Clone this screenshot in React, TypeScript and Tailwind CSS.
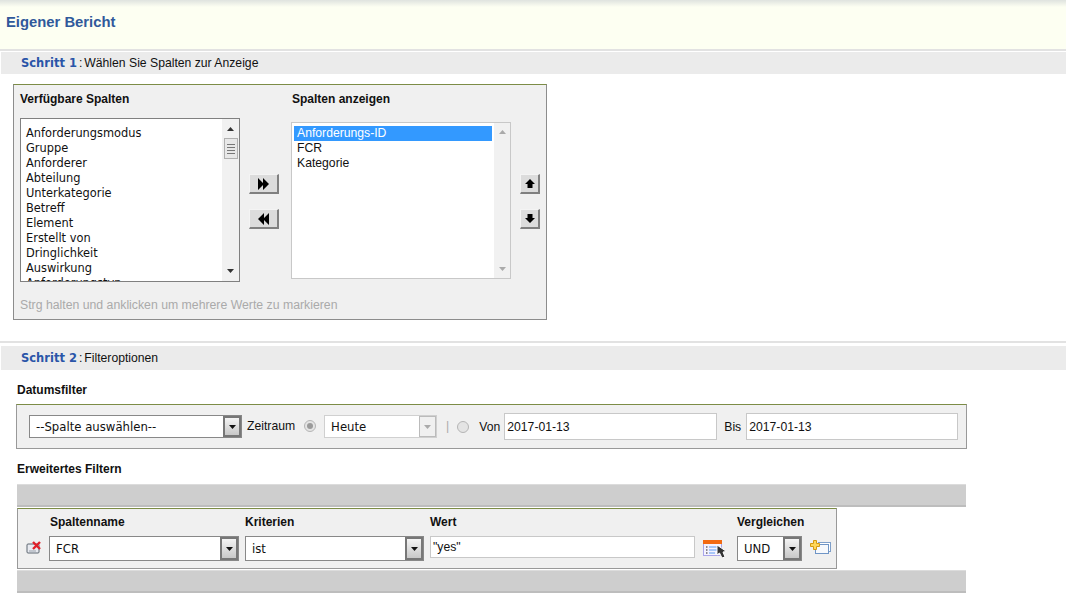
const arial = "font-['Liberation_Sans',Arial,sans-serif]";
const wide = "font-['DejaVu_Sans',Verdana,sans-serif]";

const leftItems = [
	'Anforderungsmodus',
	'Gruppe',
	'Anforderer',
	'Abteilung',
	'Unterkategorie',
	'Betreff',
	'Element',
	'Erstellt von',
	'Dringlichkeit',
	'Auswirkung',
	'Anforderungstyp',
];

function Tri({ up, color = '#333' }: { up?: boolean; color?: string }) {
	return (
		<svg width="7" height="4" viewBox="0 0 7 4" className="shrink-0">
			<path d={up ? 'M3.5 0 L7 4 H0 Z' : 'M0 0 H7 L3.5 4 Z'} fill={color} />
		</svg>
	);
}

function SectionBar({ step, title, barClass, gapClass }: { step: string; title: string; barClass: string; gapClass: string }) {
	return (
		<div>
			<div className="h-[2px] bg-[#e2e2e2]" />
			<div className={`${gapClass} bg-white`} />
			<div className={`ml-px ${barClass} bg-[#ebebeb] pl-[20px] pt-px flex items-center text-[12.2px] text-[#111]`}>
				<span className={`${wide} font-bold text-[11.5px] text-[#2a55a8]`}>{step}</span>
				<span className="ml-[2px]">:</span>
				<span className="ml-[2px]">{title}</span>
			</div>
		</div>
	);
}

function ArrowButton({ children, wideBtn }: { children: React.ReactNode; wideBtn?: boolean }) {
	return (
		<button
			className={`${wideBtn ? 'w-[30px]' : 'w-[20px]'} h-[20px] flex items-center justify-center bg-[#dcdcdc] border-t border-l border-t-[#f4f4f4] border-l-[#f4f4f4] border-r-2 border-b-2 border-r-[#808080] border-b-[#808080]`}
		>
			{children}
		</button>
	);
}

function Select({ value, className }: { value: string; className: string }) {
	return (
		<div className={`${className} flex bg-white border border-[#888]`}>
			<div className={`flex-1 flex items-center pl-[6px] pt-[2px] text-[11.7px] text-[#111] ${wide}`}>{value}</div>
			<div className="w-[18px] flex items-center justify-center bg-[linear-gradient(#f4f4f4,#c8c8c8)] border-2 border-[#777]">
				<Tri color="#111" />
			</div>
		</div>
	);
}

function Radio({ checked }: { checked?: boolean }) {
	return (
		<span className="w-[12px] h-[12px] rounded-full border border-[#b5b5b5] bg-[#e4e4e4] flex items-center justify-center">
			{checked && <span className="w-[6px] h-[6px] rounded-full bg-[#9a9a9a]" />}
		</span>
	);
}

function DeleteIcon() {
	return (
		<svg width="16" height="14" viewBox="0 0 16 14">
			<rect x="1" y="3" width="12" height="9" rx="1" fill="#e8eaf0" stroke="#5d6670" />
			<path d="M3 10 L10 10" stroke="#9aa3ad" />
			<path d="M7 1 L14 8 M14 1 L7 8" stroke="#e0202a" strokeWidth="2.4" />
		</svg>
	);
}

function PickerIcon() {
	return (
		<svg width="26" height="18" viewBox="0 0 26 18">
			<rect x="0.5" y="1.5" width="18" height="14" fill="#f4f2ff" stroke="#a9a6ea" />
			<rect x="0" y="0" width="19" height="4" fill="#f26a12" />
			<path d="M3 7 H4.5 M3 10 H4.5 M3 13 H4.5" stroke="#222" />
			<path d="M6 7 H14 M6 10 H14 M6 13 H12" stroke="#5b9bf0" />
			<path d="M14 5 V15 L16.5 13 L19 18 L22 17 L20 12 L23.5 11.5 Z" fill="#333" stroke="#fff" strokeWidth="1" />
		</svg>
	);
}

function AddIcon() {
	return (
		<svg width="21" height="14" viewBox="0 0 21 14">
			<rect x="8.5" y="2.5" width="12" height="9" fill="#fff" stroke="#7f9fc9" />
			<rect x="5.5" y="4.5" width="13" height="9" fill="#f7f9fc" stroke="#6f95c6" />
			<path d="M3.5 0.5 H6.5 V3.5 H9.5 V6.5 H6.5 V9.5 H3.5 V6.5 H0.5 V3.5 H3.5 Z" fill="#ffd75a" stroke="#d49a12" />
		</svg>
	);
}

function ColumnsPanel() {
	return (
		<div className="mt-[10px] ml-[13px] w-[534px] h-[236px] bg-[#f0f0f0] border border-[#8c8c8c] border-t-[#7c8c46] pl-[6px] flex flex-col">
			<div className="flex items-start pt-[7px] h-[33px] text-[12px] leading-[14px] font-bold text-[#111]">
				<span className="w-[272px]">Verfügbare Spalten</span>
				<span>Spalten anzeigen</span>
			</div>
			<div className="flex items-start">
				<div className={`w-[220px] h-[164px] flex bg-white border border-[#808080] ${wide} text-[11.4px] text-[#111]`}>
					<div className="flex-1 overflow-hidden pl-[5px] pt-[7px] leading-[15px]">
						{leftItems.map((item) => (
							<div key={item} className="whitespace-nowrap">
								{item}
							</div>
						))}
					</div>
					<div className="w-[17px] bg-[#f1f1f1] flex flex-col items-center pt-[8px] pb-[8px]">
						<Tri up />
						<div className="mt-[7px] w-[14px] h-[21px] bg-[#e8e8e8] border border-[#b0b0b0] flex flex-col items-center justify-center gap-[2px]">
							<span className="w-[8px] h-px bg-[#777]" />
							<span className="w-[8px] h-px bg-[#777]" />
							<span className="w-[8px] h-px bg-[#777]" />
							<span className="w-[8px] h-px bg-[#777]" />
						</div>
						<div className="flex-1" />
						<Tri />
					</div>
				</div>
				<div className="w-[51px] pt-[56px] pl-[9px] flex flex-col gap-[15px]">
					<ArrowButton wideBtn>
						<svg width="11" height="12" viewBox="0 0 11 12">
							<path d="M0 0 L6 6 L0 12 Z M5 0 L11 6 L5 12 Z" fill="#000" />
						</svg>
					</ArrowButton>
					<ArrowButton wideBtn>
						<svg width="11" height="12" viewBox="0 0 11 12">
							<path d="M11 0 L5 6 L11 12 Z M6 0 L0 6 L6 12 Z" fill="#000" />
						</svg>
					</ArrowButton>
				</div>
				<div className={`mt-[4px] w-[220px] h-[157px] flex bg-white border border-[#c8c8c8] ${arial} text-[12.2px] text-[#111]`}>
					<div className="flex-1 pl-[2px] pt-[3px] pr-[2px] leading-[15px]">
						<div className="h-[15px] bg-[#3399ff] text-white pl-[3px]">Anforderungs-ID</div>
						<div className="pl-[3px]">FCR</div>
						<div className="pl-[3px]">Kategorie</div>
					</div>
					<div className="w-[16px] bg-[#f1f1f1] flex flex-col items-center justify-between pt-[7px] pb-[7px]">
						<Tri up color="#aaa" />
						<Tri color="#aaa" />
					</div>
				</div>
				<div className="pt-[56px] pl-[9px] flex flex-col gap-[15px]">
					<ArrowButton>
						<svg width="10" height="9" viewBox="0 0 10 9">
							<path d="M5 0 L10 5 H7.5 V9 H2.5 V5 H0 Z" fill="#000" />
						</svg>
					</ArrowButton>
					<ArrowButton>
						<svg width="10" height="9" viewBox="0 0 10 9">
							<path d="M2.5 0 H7.5 V4 H10 L5 9 L0 4 H2.5 Z" fill="#000" />
						</svg>
					</ArrowButton>
				</div>
			</div>
			<div className="mt-[14px] text-[12.27px] text-[#aaaaaa]">Strg halten und anklicken um mehrere Werte zu markieren</div>
		</div>
	);
}

function DateFilter() {
	return (
		<div className="ml-[16px] w-[951px] h-[45px] bg-[#f0f0f0] border border-[#999] border-t-[#7c8c46] flex items-center pl-[12px] text-[12.2px] text-[#111]">
			<Select value="--Spalte auswählen--" className="w-[213px] h-[23px]" />
			<span className="ml-[5px] -mt-px">Zeitraum</span>
			<span className="ml-[9px] -mt-[1px]">
				<Radio checked />
			</span>
			<div className={`ml-[8px] w-[113px] h-[23px] flex bg-white border border-[#d0d0d0] ${wide} text-[11.7px]`}>
				<span className="flex-1 flex items-center pl-[6px] pt-[2px]">Heute</span>
				<span className="w-[17px] bg-[#f0f0f0] border border-[#bbb] flex items-center justify-center">
					<Tri color="#aaa" />
				</span>
			</div>
			<span className="ml-[9px] text-[#aaa]">|</span>
			<span className="ml-[8px]">
				<Radio />
			</span>
			<span className="ml-[10px] mt-px">Von</span>
			<div className="ml-[4px] w-[213px] h-[27px] bg-white border border-[#c8c8c8] flex items-center pl-[2px] pt-px">2017-01-13</div>
			<span className="ml-[7px] mt-px">Bis</span>
			<div className="ml-[5px] w-[212px] h-[27px] bg-white border border-[#c8c8c8] flex items-center pl-[2px] pt-px">2017-01-13</div>
		</div>
	);
}

function GrayBar() {
	return <div className="ml-[17px] w-[949px] h-[23px] bg-[#cecece] border-t border-t-[#dcdcdc] border-b-2 border-b-[#bdbdbd]" />;
}

function FilterColumn({
	label,
	className,
	labelClass,
	children,
}: {
	label: string;
	className: string;
	labelClass?: string;
	children: React.ReactNode;
}) {
	return (
		<div className={`${className} flex flex-col`}>
			<div className={`h-[27px] pt-[6px] text-[12px] leading-[14px] font-bold text-[#111] ${labelClass ?? ''}`}>{label}</div>
			{children}
		</div>
	);
}

function AdvancedFilter() {
	return (
		<div className="mt-px ml-[17px] w-[820px] h-[61px] bg-[#f0f0f0] border border-[#999] border-t-[#7c8c46] flex">
			<div className="w-[31px] pl-[8px] pt-[32px]">
				<DeleteIcon />
			</div>
			<FilterColumn label="Spaltenname" className="w-[196px]" labelClass="pl-px">
				<Select value="FCR" className="w-[190px] h-[25px]" />
			</FilterColumn>
			<FilterColumn label="Kriterien" className="w-[185px]">
				<Select value="ist" className="w-[179px] h-[25px]" />
			</FilterColumn>
			<FilterColumn label="Wert" className="w-[273px]">
				<div className="w-[265px] h-[22px] bg-white border border-[#c8c8c8] flex items-center pl-[2px] text-[12.2px] text-[#111]">
					"yes"
				</div>
			</FilterColumn>
			<div className="w-[34px] pt-[31px]">
				<PickerIcon />
			</div>
			<FilterColumn label="Vergleichen" className="w-[73px]">
				<Select value="UND" className="w-[65px] h-[25px]" />
			</FilterColumn>
			<div className="pt-[31px]">
				<AddIcon />
			</div>
		</div>
	);
}

export default function App() {
	return (
		<div className={`w-[1066px] h-[610px] overflow-hidden bg-white ${arial}`}>
			<div className="h-[49px] bg-[#fdfff2] bg-[linear-gradient(#dfe3df,#fdfff2_7px)] pt-[14px] pl-[6px] text-[14.8px] leading-[17px] font-bold text-[#30599b]">
				Eigener Bericht
			</div>
			<SectionBar step="Schritt 1" title="Wählen Sie Spalten zur Anzeige" gapClass="h-px" barClass="h-[22px]" />
			<ColumnsPanel />
			<div className="mt-[21px]">
				<SectionBar step="Schritt 2" title="Filteroptionen" gapClass="h-[3px]" barClass="h-[24px]" />
			</div>
			<div className="mt-[13px] mb-[7px] pl-[17px] text-[12px] leading-[14px] font-bold text-[#111]">Datumsfilter</div>
			<DateFilter />
			<div className="mt-[13px] mb-[8px] pl-[17px] text-[12px] leading-[14px] font-bold text-[#111]">Erweitertes Filtern</div>
			<GrayBar />
			<AdvancedFilter />
			<div className="mt-px">
				<GrayBar />
			</div>
		</div>
	);
}
